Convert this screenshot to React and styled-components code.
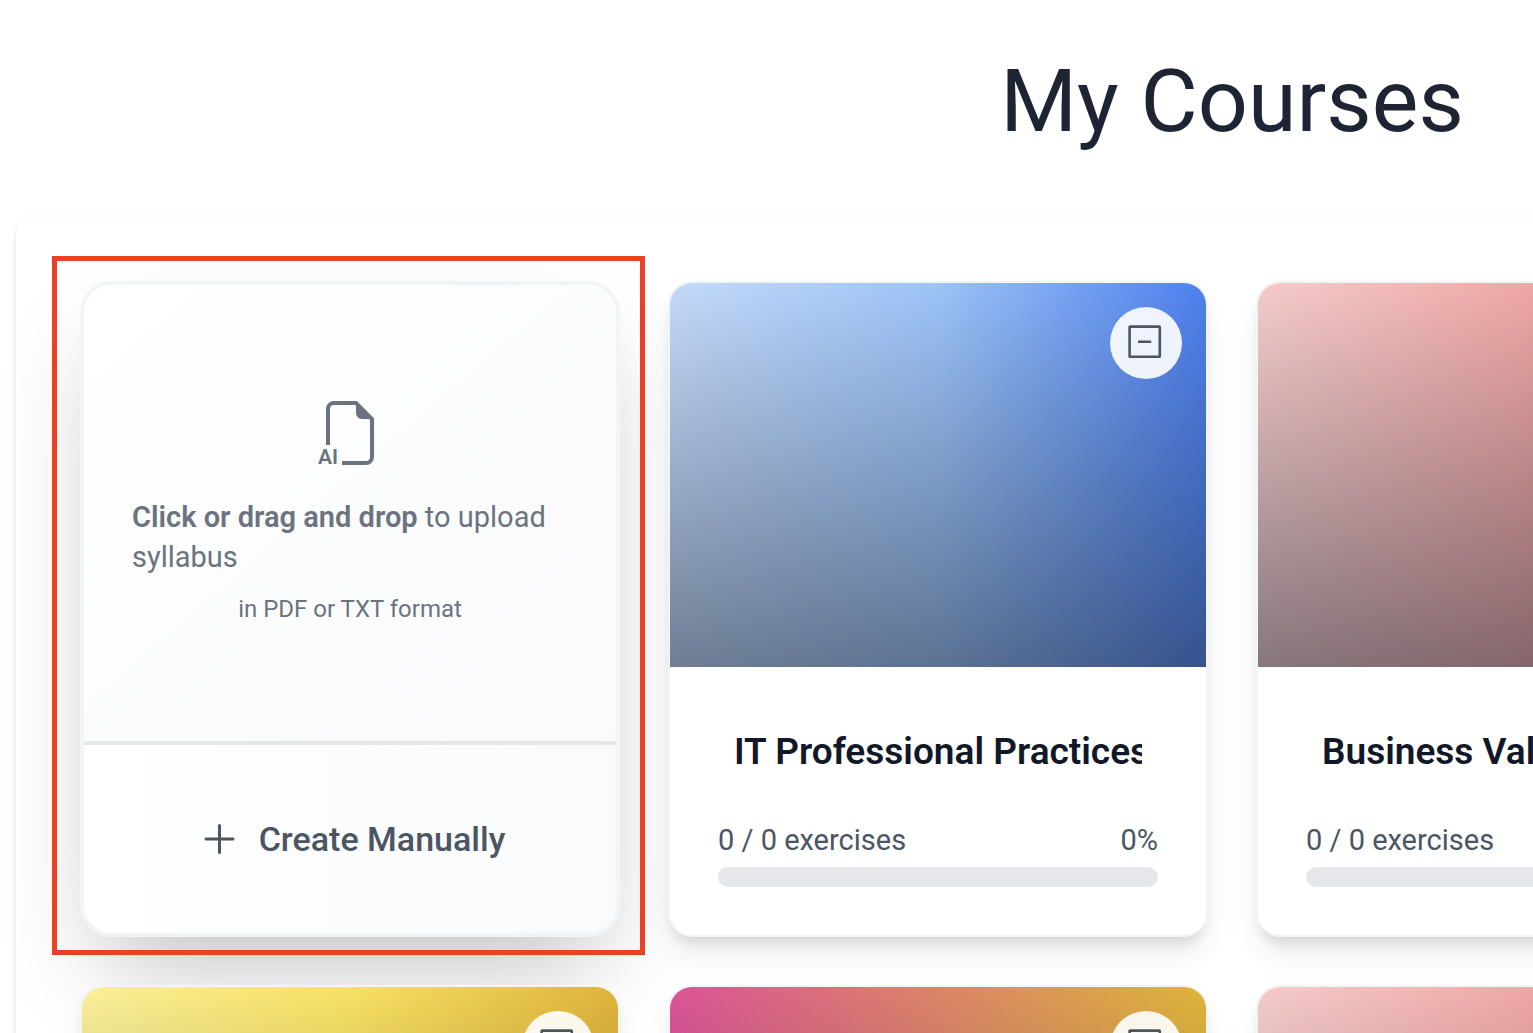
import React from "react";
import styled, { createGlobalStyle } from "styled-components";

const GlobalStyle = createGlobalStyle`
  *, *::before, *::after { box-sizing: border-box; }
  body {
    margin: 0;
    background: #ffffff;
    font-family: Roboto, "Liberation Sans", sans-serif;
    -webkit-font-smoothing: antialiased;
  }
`;

const Viewport = styled.div`
  height: 100vh;
  overflow: auto;
  scrollbar-width: none;
`;

const Page = styled.div`
  min-width: 2464px;
  padding: 0 16px 16px;
`;

const Header = styled.header`
  padding: 53px 0 68px;
  text-align: center;
`;

const PageTitle = styled.h1`
  margin: 0;
  font-size: 88px;
  line-height: 96px;
  font-weight: 400;
  color: #1f2434;
`;

const Panel = styled.main`
  padding: 64px;
  border-radius: 16px;
  background: #ffffff;
  box-shadow: 0 2px 6px rgba(0, 0, 0, 0.1), 0 2px 4px -2px rgba(0, 0, 0, 0.1);
`;

const CourseGrid = styled.div`
  display: grid;
  grid-template-columns: repeat(4, minmax(0, 1fr));
  gap: 48px;
`;

const CreateCard = styled.section`
  position: relative;
  display: flex;
  flex-direction: column;
  border: 4px solid #f3f4f6;
  border-radius: 32px;
  background: #ffffff;
  box-shadow: 0 50px 100px -24px rgba(0, 0, 0, 0.25);
`;

const Highlight = styled.div`
  position: absolute;
  inset: -29px -29px -22px -32px;
  border: 5px solid #e94126;
  pointer-events: none;
`;

const UploadZone = styled.label`
  flex: 1;
  display: flex;
  flex-direction: column;
  align-items: center;
  justify-content: center;
  padding: 48px;
  border-bottom: 4px solid #e5e7eb;
  border-radius: 28px 28px 0 0;
  background: linear-gradient(to bottom right, #ffffff, #f9fafb);
  color: #6b7280;
  cursor: pointer;
`;

const HiddenInput = styled.input`
  position: absolute;
  width: 1px;
  height: 1px;
  overflow: hidden;
  opacity: 0;
`;

const UploadText = styled.span`
  margin-top: 32px;
  font-size: 29px;
  line-height: 40px;

  strong { font-weight: 600; }
`;

const UploadHint = styled.span`
  margin-top: 16px;
  font-size: 24px;
  line-height: 32px;
`;

const ManualButton = styled.button`
  display: flex;
  align-items: center;
  justify-content: center;
  gap: 16px;
  height: 188px;
  padding: 0;
  border: 0;
  border-radius: 0 0 28px 28px;
  background: linear-gradient(to right, #ffffff, #f9fafb);
  color: #4b5563;
  font-family: inherit;
  font-size: 34px;
  line-height: 40px;
  font-weight: 500;
  cursor: pointer;
`;

const Card = styled.article`
  position: relative;
  overflow: hidden;
  border: 2px solid #f3f4f6;
  border-radius: 24px;
  background: #ffffff;
  box-shadow: 0 20px 30px -6px rgba(0, 0, 0, 0.1), 0 8px 12px -4px rgba(0, 0, 0, 0.1);
`;

const Cover = styled.div`
  height: 384px;
  background: linear-gradient(to top, rgba(33, 41, 54, 0.52), rgba(33, 41, 54, 0)),
    linear-gradient(to right, ${(p) => p.$stops});
`;

const BadgeButton = styled.button`
  position: absolute;
  top: 24px;
  right: 24px;
  display: flex;
  align-items: center;
  justify-content: center;
  width: 72px;
  height: 72px;
  padding: 0;
  border: 0;
  border-radius: 50%;
  background: rgba(255, 255, 255, 0.9);
  color: #4b5563;
  cursor: pointer;
`;

const CardBody = styled.div`
  padding: 48px;
`;

const TitleRow = styled.div`
  height: 74px;
  padding: 16px;
  margin-bottom: 30px;
`;

const CourseTitle = styled.h2`
  margin: 0;
  overflow: hidden;
  white-space: nowrap;
  font-size: 37px;
  line-height: 42px;
  font-weight: 600;
  color: #111827;
`;

const Stats = styled.div`
  display: flex;
  justify-content: space-between;
  margin-bottom: 6px;
  font-size: 29px;
  line-height: 42px;
  color: #4b5563;
`;

const ProgressBar = styled.progress`
  display: block;
  width: 100%;
  height: 20px;
  appearance: none;
  border: 0;
  border-radius: 10px;
  overflow: hidden;
  background: #e5e7eb;

  &::-webkit-progress-bar { background: #e5e7eb; }
  &::-webkit-progress-value { background: #3b82f6; }
`;

const FileSvg = styled.svg`
  overflow: visible;
`;

const AiFileIcon = () => (
  <FileSvg width="64" height="64" viewBox="0 0 64 64" fill="none" aria-hidden="true">
    <path d="M10 44V8a6 6 0 0 1 6-6h22l16 16v38a6 6 0 0 1-6 6H24" stroke="currentColor" strokeWidth="4" />
    <path d="M38 0v12a6 6 0 0 0 6 6h12z" fill="currentColor" />
    <text x="0" y="63" fontSize="21" fontWeight="600" fill="currentColor">AI</text>
  </FileSvg>
);

const PlusIcon = () => (
  <svg width="48" height="48" viewBox="0 0 24 24" fill="none" aria-hidden="true">
    <path d="M12.25 5.25v13.5m6.75-6.75h-13.5" stroke="currentColor" strokeWidth="1.5" strokeLinecap="round" />
  </svg>
);

const MinusSquareIcon = () => (
  <svg width="36" height="36" viewBox="0 0 36 36" fill="none" stroke="currentColor" strokeWidth="2.6" aria-hidden="true">
    <rect x="1.6" y="1.6" width="30.2" height="30.2" rx="0.6" />
    <path d="M10 16.7h13.2" />
  </svg>
);

const covers = {
  blue: "#c5dafa, #9dc3f8, #4d80ee",
  red: "#f5cccb, #f0a8a6, #dd524c",
  yellow: "#fbf099, #f8e163, #dfb43b",
  sunset: "#db5497, #dfb43b",
};

const courses = [
  { id: 1, title: "IT Professional Practices", cover: "blue" },
  { id: 2, title: "Business Val", cover: "red" },
  { id: 3, cover: null },
  { id: 4, cover: "yellow" },
  { id: 5, cover: "sunset" },
  { id: 6, cover: "red" },
];

function CourseCard({ title, cover }) {
  return (
    <Card>
      <Cover $stops={covers[cover]} />
      <BadgeButton type="button" aria-label="Remove course">
        <MinusSquareIcon />
      </BadgeButton>
      <CardBody>
        <TitleRow>{title && <CourseTitle>{title}</CourseTitle>}</TitleRow>
        <Stats>
          <span>0 / 0 exercises</span>
          <span>0%</span>
        </Stats>
        <ProgressBar value={0} max={100} aria-label="Course progress" />
      </CardBody>
    </Card>
  );
}

export default function App() {
  return (
    <Viewport>
      <GlobalStyle />
      <Page>
        <Header>
          <PageTitle>My Courses</PageTitle>
        </Header>
        <Panel>
          <CourseGrid>
            <CreateCard>
              <UploadZone>
                <HiddenInput type="file" accept=".pdf,.txt" />
                <AiFileIcon />
                <UploadText>
                  <strong>Click or drag and drop</strong> to upload syllabus
                </UploadText>
                <UploadHint>in PDF or TXT format</UploadHint>
              </UploadZone>
              <ManualButton type="button">
                <PlusIcon />
                Create Manually
              </ManualButton>
              <Highlight />
            </CreateCard>
            {courses.map((c) =>
              c.cover ? <CourseCard key={c.id} title={c.title} cover={c.cover} /> : <div key={c.id} />
            )}
          </CourseGrid>
        </Panel>
      </Page>
    </Viewport>
  );
}
